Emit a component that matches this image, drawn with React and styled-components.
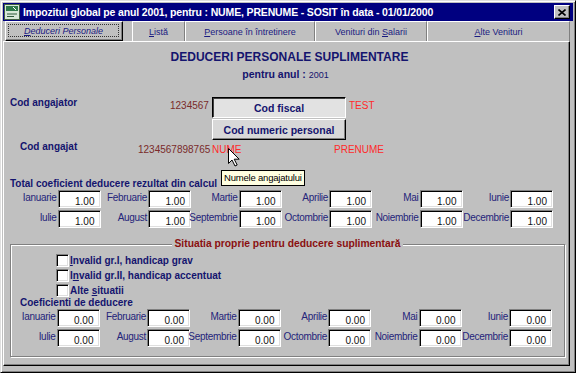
import styled, { createGlobalStyle } from "styled-components";

const GlobalStyle = createGlobalStyle`
  html, body {
    margin: 0;
    padding: 0;
    background: #c0c0c0;
  }
  body {
    font-family: "Liberation Sans", Arial, sans-serif;
  }
`;

const Window = styled.div`
  position: relative;
  box-sizing: border-box;
  width: 576px;
  height: 373px;
  padding: 2px 2px 6px 2px;
  background: #c0c0c0;
  border: 1px solid;
  border-color: #dfdfdf #000 #000 #dfdfdf;
  box-shadow: inset 1px 1px #fff, inset -1px -1px #808080;
  display: flex;
  flex-direction: column;
`;

const TitleBar = styled.div`
  height: 18px;
  background: #000080;
  display: flex;
  align-items: center;
  padding: 0 3px 0 1px;
  color: #fff;
  font-size: 10.5px;
  letter-spacing: -0.15px;
  font-weight: bold;
  gap: 3px;
`;

const TitleText = styled.span`
  flex: 1;
  white-space: nowrap;
`;

const CloseButton = styled.div`
  box-sizing: border-box;
  width: 16px;
  height: 14px;
  background: #c0c0c0;
  border: 1px solid;
  border-color: #fff #000 #000 #fff;
  box-shadow: inset -1px -1px #808080;
  display: flex;
  align-items: center;
  justify-content: center;
`;

const Tabs = styled.div`
  display: flex;
  height: 20px;
  margin-right: 3px;
`;

const Tab = styled.div`
  box-sizing: border-box;
  width: ${(p) => p.$w}px;
  height: 20px;
  display: flex;
  align-items: center;
  justify-content: center;
  font-size: 9px;
  color: #1a1a80;
  white-space: nowrap;
  border-top: 1px solid #fff;
  border-left: 1px solid #fff;
  border-right: 1px solid #808080;
  ${(p) =>
    p.$active &&
    `
    margin: 0 9px 0 2px;
    font-style: italic;
    border-color: #fff #000 #000 #fff;
    border-style: solid;
    border-width: 1px;
    box-shadow: inset -1px -1px #808080;
    padding: 2px 3px 3px 2px;
  `}
`;

const Focus = styled.span`
  box-sizing: border-box;
  width: 100%;
  height: 100%;
  border: 1px dotted #333;
  display: flex;
  align-items: center;
  justify-content: center;
`;

const Panel = styled.div`
  position: relative;
  flex: 1;
  margin-right: 3px;
  box-sizing: border-box;
  border: 1px solid;
  border-color: #fff #000 #000 #fff;
  box-shadow: inset -1px -1px #808080;
  padding: 0 0 0 6px;
  display: flex;
  flex-direction: column;
`;

const Heading = styled.div`
  margin: 8px 0 0 0;
  text-align: center;
  font-size: 12px;
  line-height: 15px;
  font-weight: bold;
  color: #14146e;
`;

const SubHeading = styled.div`
  margin: 2px 0 0 0;
  padding-right: 8px;
  text-align: center;
  font-size: 10.5px;
  line-height: 14px;
  font-weight: bold;
  color: #14146e;

  span {
    font-weight: normal;
    font-size: 9px;
  }
`;

const Row = styled.div`
  display: flex;
  align-items: flex-start;
  margin-top: ${(p) => p.$top}px;
`;

const FieldLabel = styled.div`
  box-sizing: border-box;
  width: ${(p) => p.$w}px;
  padding-left: ${(p) => p.$indent || 0}px;
  font-size: 10px;
  line-height: 12px;
  font-weight: bold;
  color: #14146e;
`;

const Value = styled.div`
  width: ${(p) => p.$w}px;
  margin-top: 3px;
  margin-right: 4px;
  text-align: ${(p) => p.$align || "left"};
  font-size: 10px;
  line-height: 12px;
  color: ${(p) => (p.$red ? "#ff2a2a" : "#7a2a2a")};
  white-space: nowrap;
`;

const ButtonStack = styled.div`
  display: flex;
  flex-direction: column;
  width: 134px;
  margin-right: 3px;
`;

const Button = styled.button`
  box-sizing: border-box;
  width: 134px;
  height: 21px;
  margin: 0 0 1px 0;
  padding: 0;
  font-family: inherit;
  font-size: 10.5px;
  font-weight: bold;
  color: #14146e;
  background: ${(p) => (p.$pressed ? "#e2e2e2" : "#d8d8d8")};
  border: 1px solid;
  border-color: ${(p) => (p.$pressed ? "#000 #fff #fff #000" : "#fff #000 #000 #fff")};
  box-shadow: ${(p) => (p.$pressed ? "inset 1px 1px #404040" : "inset -1px -1px #808080")};
`;

const SectionLabel = styled.div`
  margin-top: ${(p) => p.$top}px;
  padding-left: ${(p) => p.$indent || 0}px;
  font-size: 10px;
  line-height: 12px;
  font-weight: bold;
  color: #14146e;
  white-space: nowrap;
`;

const MonthGrid = styled.div`
  display: grid;
  grid-template-columns: repeat(6, minmax(0, 1fr));
  row-gap: 2px;
  width: 543px;
  margin-left: ${(p) => p.$shift || 0}px;
`;

const Cell = styled.div`
  display: flex;
  justify-content: flex-end;
  align-items: flex-start;
`;

const MonthName = styled.span`
  margin-top: 2px;
  margin-right: 1px;
  font-size: 10px;
  letter-spacing: -0.3px;
  line-height: 11px;
  color: #24247a;
  white-space: nowrap;
`;

const Field = styled.div`
  box-sizing: border-box;
  flex: none;
  width: 43px;
  height: 18px;
  background: #fff;
  border: 1px solid;
  border-color: #808080 #fff #fff #808080;
  box-shadow: inset 1px 1px #000, inset -1px -1px #dfdfdf;
  padding: 5px 5px 0 0;
  text-align: right;
  font-size: 10px;
  line-height: 11px;
  color: #111;
`;

const Group = styled.fieldset`
  margin: 10px 4px 0 0;
  padding: 0 0 9px 0;
  min-width: 0;
  border: 1px solid #808080;
  box-shadow: 1px 1px 0 #fff, inset 1px 1px 0 #fff;
`;

const Legend = styled.legend`
  margin: 0 auto;
  padding: 0 2px;
  font-size: 10.3px;
  line-height: 12px;
  font-weight: bold;
  color: #8a1010;
  background: #c0c0c0;
`;

const Checks = styled.div`
  display: flex;
  flex-direction: column;
  gap: 2px;
  margin: 4px 0 0 45px;
`;

const CheckRow = styled.label`
  display: flex;
  align-items: center;
  gap: 1px;
  font-size: 10px;
  line-height: 13px;
  font-weight: bold;
  color: #14146e;
`;

const Box = styled.span`
  box-sizing: border-box;
  width: 13px;
  height: 13px;
  background: #fff;
  border: 1px solid;
  border-color: #808080 #fff #fff #808080;
  box-shadow: inset 1px 1px #000, inset -1px -1px #dfdfdf;
`;

const Tooltip = styled.div`
  position: absolute;
  left: 217px;
  top: 128px;
  padding: 0 2px;
  height: 14px;
  background: #ffffe1;
  border: 1px solid #000;
  font-size: 9.5px;
  letter-spacing: -0.2px;
  line-height: 14px;
  color: #000;
  white-space: nowrap;
`;

const Cursor = styled.svg`
  position: absolute;
  left: 224px;
  top: 106px;
`;

const months1 = ["Ianuarie", "Februarie", "Martie", "Aprilie", "Mai", "Iunie"];
const months2 = ["Iulie", "August", "Septembrie", "Octombrie", "Noiembrie", "Decembrie"];

function Months({ value, shift }) {
  return (
    <MonthGrid $shift={shift}>
      {[...months1, ...months2].map((m) => (
        <Cell key={m}>
          <MonthName>{m}</MonthName>
          <Field>{value}</Field>
        </Cell>
      ))}
    </MonthGrid>
  );
}

function AppIcon() {
  return (
    <svg width="16" height="16" viewBox="0 0 16 16">
      <rect x="0.5" y="0.5" width="15" height="15" fill="#d8e8d8" stroke="#406040" />
      <rect x="2" y="2" width="12" height="5" fill="#2f7a4a" />
      <path d="M3 10h10M3 12.5h7" stroke="#2f5a3a" strokeWidth="1.2" />
      <path d="M9 3l3 3" stroke="#fff" strokeWidth="1" />
    </svg>
  );
}

export default function App() {
  return (
    <>
      <GlobalStyle />
      <Window>
        <TitleBar>
          <AppIcon />
          <TitleText>Impozitul global pe anul 2001, pentru : NUME, PRENUME - SOSIT în data - 01/01/2000</TitleText>
          <CloseButton>
            <svg width="8" height="7" viewBox="0 0 8 7">
              <path d="M0.5 0.5l7 6M7.5 0.5l-7 6" stroke="#000" strokeWidth="1.6" />
            </svg>
          </CloseButton>
        </TitleBar>

        <Tabs>
          <Tab $w={118} $active>
            <Focus>
              <span>
                <u>D</u>educeri Personale
              </span>
            </Focus>
          </Tab>
          <Tab $w={53}>
            <span>
              <u>L</u>istă
            </span>
          </Tab>
          <Tab $w={130}>
            <span>
              <u>P</u>ersoane în întretinere
            </span>
          </Tab>
          <Tab $w={112}>
            <span>
              Venituri din <u>S</u>alarii
            </span>
          </Tab>
          <Tab $w={143}>
            <span>
              <u>A</u>lte Venituri
            </span>
          </Tab>
        </Tabs>

        <Panel>
          <Heading>DEDUCERI PERSONALE SUPLIMENTARE</Heading>
          <SubHeading>
            pentru anul : <span>2001</span>
          </SubHeading>

          <Row $top={15}>
            <FieldLabel $w={160}>Cod angajator</FieldLabel>
            <Value $w={38} $align="right">1234567</Value>
            <ButtonStack>
              <Button $pressed>Cod fiscal</Button>
              <Button>Cod numeric personal</Button>
            </ButtonStack>
            <Value $w={40} $red>
              TEST
            </Value>
          </Row>

          <Row $top={0}>
            <FieldLabel $w={128} $indent={10}>
              Cod angajat
            </FieldLabel>
            <Value $w={70} $align="right">1234567898765</Value>
            <Value $w={118} $red>
              NUME
            </Value>
            <Value $w={60} $red>
              PRENUME
            </Value>
          </Row>

          <SectionLabel $top={22}>Total coeficient deducere rezultat din calcul</SectionLabel>
          <Months value="1.00" />

          <Group>
            <Legend>Situatia proprie pentru deducere suplimentară</Legend>
            <Checks>
              <CheckRow>
                <Box />
                <span>
                  <u>I</u>nvalid gr.I, handicap grav
                </span>
              </CheckRow>
              <CheckRow>
                <Box />
                <span>
                  I<u>n</u>valid gr.II, handicap accentuat
                </span>
              </CheckRow>
              <CheckRow>
                <Box />
                <span>
                  Alte <u>s</u>ituatii
                </span>
              </CheckRow>
            </Checks>
            <SectionLabel $top={0} $indent={9}>
              Coeficienti de deducere
            </SectionLabel>
            <Months value="0.00" shift={-2} />
          </Group>

          <Tooltip>Numele angajatului</Tooltip>
          <Cursor width="12" height="19" viewBox="0 0 12 19">
            <path d="M0.5 0.5v15l3.5-3.5 3 6 2.2-1-3-5.8h5z" fill="#fff" stroke="#000" strokeWidth="1" />
          </Cursor>
        </Panel>
      </Window>
    </>
  );
}
